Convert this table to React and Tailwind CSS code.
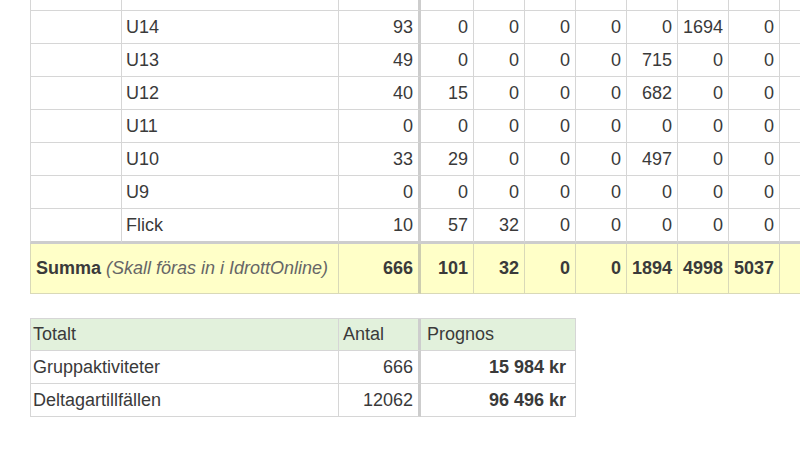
import React from "react";

const rows = [
  { label: "", vals: ["", "", "", "", "", "", "", "", ""], hidden: true },
  { label: "U14", vals: ["93", "0", "0", "0", "0", "0", "1694", "0", ""] },
  { label: "U13", vals: ["49", "0", "0", "0", "0", "715", "0", "0", ""] },
  { label: "U12", vals: ["40", "15", "0", "0", "0", "682", "0", "0", ""] },
  { label: "U11", vals: ["0", "0", "0", "0", "0", "0", "0", "0", ""] },
  { label: "U10", vals: ["33", "29", "0", "0", "0", "497", "0", "0", ""] },
  { label: "U9", vals: ["0", "0", "0", "0", "0", "0", "0", "0", ""] },
  { label: "Flick", vals: ["10", "57", "32", "0", "0", "0", "0", "0", ""] },
];

const sums = ["666", "101", "32", "0", "0", "1894", "4998", "5037", ""];

const numW = ["w-[53px]", "w-[51px]", "w-[51px]", "w-[51px]", "w-[51px]", "w-[51px]", "w-[51px]", "w-[51px]"];

function DataRow({ r, last }) {
  const bb = last ? "border-b-[3px] border-b-[#cdcdcd]" : "border-b border-b-[#d6d6d6]";
  return (
    <div className={`flex shrink-0 ${last ? "h-[35px]" : "h-[33px]"}`}>
      <div className={`w-[92px] shrink-0 border-l border-r border-[#d6d6d6] ${bb}`} />
      <div className={`w-[217px] shrink-0 border-r border-r-[#d6d6d6] ${bb} flex items-center pl-[4px]`}>
        {r.label}
      </div>
      <div className={`w-[82px] shrink-0 border-r-[3px] border-r-[#cdcdcd] ${bb} flex items-center justify-end pr-[5px]`}>
        {r.vals[0]}
      </div>
      {r.vals.slice(1).map((v, i) => (
        <div
          key={i}
          className={`${numW[i] || "w-[51px]"} shrink-0 border-r border-r-[#d6d6d6] ${bb} flex items-center justify-end pr-[5px]`}
        >
          {v}
        </div>
      ))}
    </div>
  );
}

export default function App() {
  return (
    <div
      className="w-[800px] h-[450px] overflow-hidden bg-white text-[18px] text-[#3a3a3a]"
      style={{ fontFamily: '"Liberation Sans", Arial, sans-serif' }}
    >
      <div className="ml-[30px] mt-[-22px] flex flex-col w-[900px]">
        {rows.map((r, i) => (
          <DataRow key={i} r={r} last={i === rows.length - 1} />
        ))}
        <div className="flex h-[50px] bg-[#ffffc8]">
          <div className="w-[309px] shrink-0 border-l border-r border-b border-[#d9d9b8] flex items-center pl-[5px] whitespace-nowrap">
            <span className="font-bold">Summa</span>
            <span className="italic text-[#666] ml-[5px]">(Skall föras in i IdrottOnline)</span>
          </div>
          <div className="w-[82px] shrink-0 border-r-[3px] border-r-[#cdcdb0] border-b border-b-[#d9d9b8] flex items-center justify-end pr-[5px] font-bold">
            {sums[0]}
          </div>
          {sums.slice(1).map((v, i) => (
            <div
              key={i}
              className={`${numW[i] || "w-[51px]"} shrink-0 border-r border-r-[#d9d9b8] border-b border-b-[#d9d9b8] flex items-center justify-end pr-[5px] font-bold`}
            >
              {v}
            </div>
          ))}
        </div>
      </div>

      <div className="ml-[30px] mt-[24px] flex flex-col w-[546px] border-t border-[#d6d6d6]">
        <div className="flex h-[32px] bg-[#e2f1dc]">
          <div className="w-[309px] shrink-0 border-l border-r border-b border-[#d6d6d6] flex items-center pl-[2px]">Totalt</div>
          <div className="w-[82px] shrink-0 border-r-[3px] border-r-[#cdcdcd] border-b border-b-[#d6d6d6] flex items-center pl-[4px]">Antal</div>
          <div className="w-[155px] shrink-0 border-r border-b border-[#d6d6d6] flex items-center pl-[6px]">Prognos</div>
        </div>
        {[
          ["Gruppaktiviteter", "666", "15 984 kr"],
          ["Deltagartillfällen", "12062", "96 496 kr"],
        ].map(([a, b, c]) => (
          <div key={a} className="flex h-[33px] bg-white">
            <div className="w-[309px] shrink-0 border-l border-r border-b border-[#d6d6d6] flex items-center pl-[2px]">{a}</div>
            <div className="w-[82px] shrink-0 border-r-[3px] border-r-[#cdcdcd] border-b border-b-[#d6d6d6] flex items-center justify-end pr-[5px]">{b}</div>
            <div className="w-[155px] shrink-0 border-r border-b border-[#d6d6d6] flex items-center justify-end pr-[9px] font-bold">{c}</div>
          </div>
        ))}
      </div>
    </div>
  );
}
